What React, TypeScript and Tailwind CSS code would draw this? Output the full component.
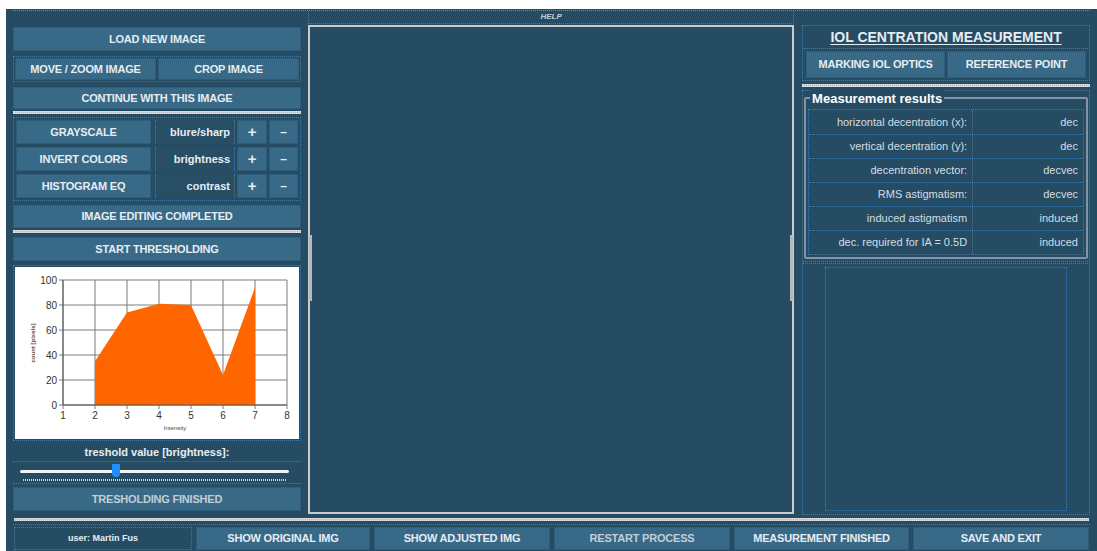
import React from "react";

const font = { fontFamily: '"Liberation Sans", Arial, sans-serif' };

function Btn({ label, className = "" }: { label: string; className?: string }) {
  return (
    <div
      className={`flex items-center justify-center bg-[#386986] border border-[#2f5c78] text-[11px] font-bold tracking-[-0.2px] ${className}`}
    >
      {label}
    </div>
  );
}

function Separator({ className = "" }: { className?: string }) {
  return <div className={`h-[3px] bg-[#c6c9cb] border-y border-dotted border-[#e8e8e8] ${className}`} />;
}

const toolRows = [
  { name: "GRAYSCALE", param: "blure/sharp" },
  { name: "INVERT COLORS", param: "brightness" },
  { name: "HISTOGRAM EQ", param: "contrast" },
];

const results = [
  ["horizontal decentration (x):", "dec"],
  ["vertical decentration (y):", "dec"],
  ["decentration vector:", "decvec"],
  ["RMS astigmatism:", "decvec"],
  ["induced astigmatism", "induced"],
  ["dec. required for IA = 0.5D", "induced"],
];

// histogram of pixel counts per intensity
const hist = [
  [2, 35],
  [3, 74],
  [4, 81],
  [5, 80],
  [6, 24],
  [7, 94],
];

function Histogram() {
  const x = (v: number) => 48 + (v - 1) * 32;
  const y = (c: number) => 138 - c * 1.25;
  const pts = [
    `${x(2)},${y(0)}`,
    ...hist.map(([i, c]) => `${x(i)},${y(c)}`),
    `${x(7)},${y(0)}`,
  ].join(" ");
  return (
    <svg width="285" height="172" viewBox="0 0 285 172" className="block">
      {[0, 20, 40, 60, 80, 100].map((c) => (
        <g key={c}>
          <line x1={44} x2={272} y1={y(c)} y2={y(c)} stroke="#7d7d7d" strokeWidth="1" />
          <text x={42} y={y(c) + 3.5} fontSize="10" textAnchor="end" fill="#333">
            {c}
          </text>
        </g>
      ))}
      {[1, 2, 3, 4, 5, 6, 7, 8].map((i) => (
        <g key={i}>
          <line x1={x(i)} x2={x(i)} y1={y(100)} y2={y(0) + 4} stroke="#7d7d7d" strokeWidth="1" />
          <text x={x(i)} y={152} fontSize="10" textAnchor="middle" fill="#333">
            {i}
          </text>
        </g>
      ))}
      <polygon points={pts} fill="#ff6600" />
      <line x1={48} x2={48} y1={y(100)} y2={y(0)} stroke="#555" />
      <line x1={48} x2={272} y1={y(0)} y2={y(0)} stroke="#555" />
      <text x={160} y={163} fontSize="6" textAnchor="middle" fill="#444">
        Intensity
      </text>
      <text x={0} y={0} fontSize="6" fontWeight="bold" textAnchor="middle" fill="#6a4a3a" transform="translate(20 76) rotate(-90)">
        count [pixels]
      </text>
    </svg>
  );
}

export default function App() {
  return (
    <div className="w-[1097px] h-[551px] bg-white pl-[6px] pt-[9px] overflow-hidden text-[#e6edf2]" style={font}>
      <div className="h-full bg-[#264c63] flex flex-col">
        {/* main workspace */}
        <div className="mt-[1px] h-[505px] flex border-t border-dotted border-[#6f93ad] mx-[7px]">
          {/* left: image tools */}
          <div className="w-[288px] flex flex-col pt-[16px]">
            <Btn label="LOAD NEW IMAGE" className="h-[24px]" />
            <div className="mt-[5px] h-[26px] flex gap-[2px] p-px border border-dotted border-[#3f7bab]">
              <Btn label="MOVE / ZOOM IMAGE" className="flex-1" />
              <Btn label="CROP IMAGE" className="flex-1" />
            </div>
            <Btn label="CONTINUE WITH THIS IMAGE" className="mt-[5px] h-[22px]" />
            <Separator className="mt-[2px]" />
            <div className="mt-[3px] h-[84px] border border-dotted border-[#3f7bab] flex flex-col justify-between p-[2px]">
              {toolRows.map((r) => (
                <div key={r.name} className="flex h-[24px] gap-[2px]">
                  <Btn label={r.name} className="w-[135px]" />
                  <div className="w-[80px] ml-[2px] flex items-center justify-end pr-[4px] text-[11px] font-bold bg-[#284e65] border-x border-dotted border-[#3f7bab]">
                    {r.param}
                  </div>
                  <Btn label="+" className="w-[30px] text-[15px]" />
                  <Btn label="–" className="flex-1 text-[12px]" />
                </div>
              ))}
            </div>
            <Btn label="IMAGE EDITING COMPLETED" className="mt-[4px] h-[23px]" />
            <Separator className="mt-[2px]" />
            <Btn label="START THRESHOLDING" className="mt-[4px] h-[24px]" />
            <div className="mt-[4px] h-[176px] border border-dotted border-[#3f7bab] p-px">
              <div className="bg-white h-full">
                <Histogram />
              </div>
            </div>
            <div className="h-[18px] mt-[3px] flex items-center justify-center text-[11px] font-bold border-b border-dotted border-[#3f7bab]">
              treshold value [brightness]:
            </div>
            {/* threshold slider */}
            <div className="relative h-[22px] border-b border-dotted border-[#3f7bab]">
              <div className="absolute left-[7px] right-[12px] top-[8px] h-[3px] bg-[#f2f2f2] rounded-full" />
              <div className="absolute left-[99px] top-[2px] w-[8px] h-[13px] bg-[#1f8fff] rounded-b-[4px] rounded-t-[1px]" />
              <div className="absolute left-[10px] right-[15px] top-[17px] h-[2px] border-y border-dotted border-[#cfd3d6]" />
            </div>
            <Btn label="TRESHOLDING FINISHED" className="mt-[3px] h-[24px] text-[#c3ced6]" />
          </div>

          {/* center: image view */}
          <div className="w-[488px] ml-[7px] flex flex-col">
            <div className="h-[13px] border-b border-x border-dotted border-[#3f7bab] flex items-center justify-center text-[8px] italic font-bold text-[#c5ccd2]">
              HELP
            </div>
            <div className="relative mt-[1px] h-[489px] border-2 border-[#c9cbcc]">
              <div className="absolute -left-[1px] top-[208px] w-[3px] h-[66px] bg-[#b6b9bb]" />
              <div className="absolute -right-[1px] top-[208px] w-[3px] h-[66px] bg-[#b6b9bb]" />
            </div>
          </div>

          {/* right: measurement */}
          <div className="w-[289px] ml-[8px] flex flex-col pt-[14px]">
            <div className="border border-dotted border-[#3f7bab] flex flex-col px-px">
              <div className="h-[22px] flex items-center justify-center">
                <span className="text-[14px] font-bold underline underline-offset-[2px]">
                  IOL CENTRATION MEASUREMENT
                </span>
              </div>
              <div className="h-[32px] flex gap-[2px] p-[2px] border-t border-dotted border-[#3f7bab]">
                <Btn label="MARKING IOL OPTICS" className="flex-1" />
                <Btn label="REFERENCE POINT" className="flex-1" />
              </div>
            </div>
            <Separator className="mt-[3px]" />
            <div className="mt-[3px] h-[172px] border border-dotted border-[#3f7bab] px-[1px] pt-[6px]">
              <div className="relative h-[162px] border-2 border-[#8494a6] rounded-[2px] pt-[10px] px-[2px]">
                <div className="absolute -top-[10px] left-[4px] px-[2px] bg-[#264c63] text-[13px] font-bold text-white">
                  Measurement results
                </div>
                <div className="border border-dotted border-[#3f7bab]">
                  {results.map(([k, v], i) => (
                    <div
                      key={i}
                      className={`flex h-[24px] text-[11px] text-[#d3dde4] ${i > 0 ? "border-t border-dotted border-[#3f7bab]" : ""}`}
                    >
                      <div className="w-[164px] flex items-center justify-end pr-[5px] border-r border-dotted border-[#3f7bab]">
                        {k}
                      </div>
                      <div className="flex-1 flex items-center justify-end pr-[5px]">{v}</div>
                    </div>
                  ))}
                </div>
              </div>
            </div>
            <div className="mt-px flex-1 border border-dotted border-[#3f7bab] px-[22px] py-[3px]">
              <div className="h-full border border-dotted border-[#3f7bab]" />
            </div>
          </div>
        </div>

        {/* bottom bar */}
        <Separator className="mt-[3px] mx-[8px]" />
        <div className="mt-[3px] mx-[7px] flex-1 flex gap-[4px] px-px pt-[2px] pb-px border-t border-dotted border-[#3f7bab]">
          <div className="w-[178px] flex items-center justify-center text-[9px] font-bold border border-dotted border-[#3f7bab]">
            user: Martin Fus
          </div>
          <Btn label="SHOW ORIGINAL IMG" className="w-[174px]" />
          <Btn label="SHOW ADJUSTED IMG" className="w-[176px]" />
          <Btn label="RESTART PROCESS" className="w-[176px] text-[#c3ced6]" />
          <Btn label="MEASUREMENT FINISHED" className="w-[175px]" />
          <Btn label="SAVE AND EXIT" className="flex-1" />
        </div>
      </div>
    </div>
  );
}
